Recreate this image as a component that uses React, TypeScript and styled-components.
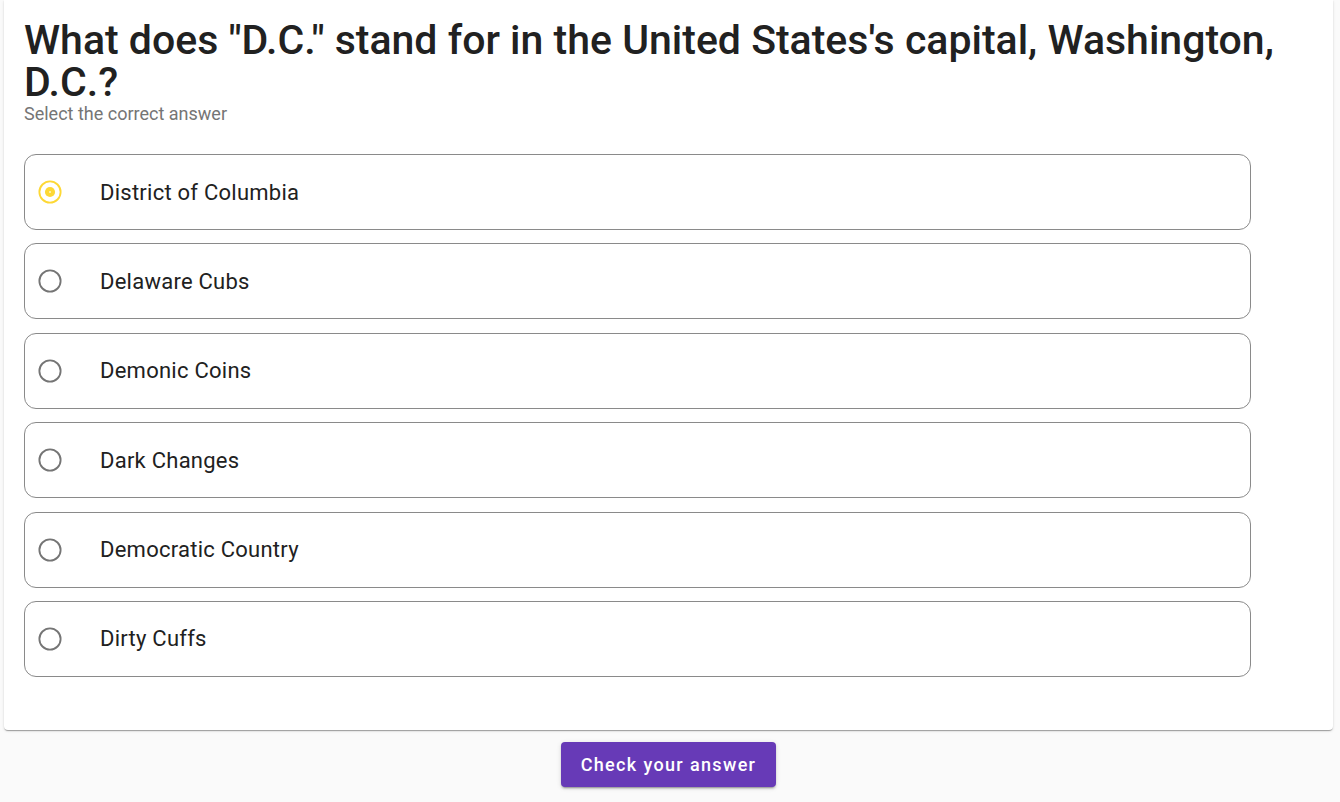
import React, { useState } from "react";
import styled, { createGlobalStyle } from "styled-components";

const GlobalStyle = createGlobalStyle`
  html, body {
    margin: 0;
    padding: 0;
    background: #fafafa;
    font-family: Roboto, "Liberation Sans", Arial, sans-serif;
  }
  * { box-sizing: border-box; }
`;

const Page = styled.div`
  display: flex;
  flex-direction: column;
  align-items: center;
  padding: 0 7px 14px 4px;
`;

const Card = styled.div`
  width: 100%;
  background: #ffffff;
  border-radius: 0 0 4px 4px;
  box-shadow: 0 2px 1px -1px rgba(0,0,0,0.2), 0 1px 1px 0 rgba(0,0,0,0.14), 0 1px 3px 0 rgba(0,0,0,0.12);
  padding: 19px 20px 53px 20px;
`;

const Title = styled.h1`
  margin: 0;
  font-size: 41px;
  line-height: 42px;
  font-weight: 500;
  color: #212121;
`;

const Subtitle = styled.div`
  font-size: 18px;
  line-height: 22px;
  color: #757575;
  font-weight: 400;
`;

const Options = styled.div`
  margin-top: 29px;
  width: 1227px;
  display: flex;
  flex-direction: column;
  gap: 13.4px;
`;

const Option = styled.label`
  height: 76px;
  display: flex;
  align-items: center;
  border: 1px solid #8a8a8a;
  border-radius: 12px;
  padding-left: 13px;
  cursor: pointer;
`;

const RadioBox = styled.span`
  width: 24px;
  height: 24px;
  display: flex;
  align-items: center;
  justify-content: center;
  flex: none;
`;

const OptionText = styled.span`
  margin-left: 38px;
  font-size: 22px;
  letter-spacing: 0.25px;
  color: #212121;
`;

const Button = styled.button`
  margin-top: 12px;
  height: 45px;
  width: 215px;
  border: none;
  border-radius: 4px;
  background: #673ab7;
  color: #ffffff;
  font-family: Roboto, "Liberation Sans", Arial, sans-serif;
  font-size: 18px;
  font-weight: 500;
  letter-spacing: 1.35px;
  box-shadow: 0 3px 1px -2px rgba(0,0,0,0.2), 0 2px 2px 0 rgba(0,0,0,0.14), 0 1px 5px 0 rgba(0,0,0,0.12);
  cursor: pointer;
`;

const Radio: React.FC<{ checked: boolean }> = ({ checked }) => (
  <RadioBox>
    <svg width="26" height="26" viewBox="0 0 26 26">
      {checked ? (
        <>
          <circle cx="13" cy="13" r="11.5" fill="none" stroke="#fdd835" strokeWidth="2" />
          <circle cx="13" cy="13" r="5.5" fill="#fdd835" />
          <circle cx="13" cy="13" r="1" fill="#fff8d0" />
        </>
      ) : (
        <circle cx="13" cy="13" r="11.5" fill="none" stroke="#757575" strokeWidth="2" />
      )}
    </svg>
  </RadioBox>
);

const answers = [
  "District of Columbia",
  "Delaware Cubs",
  "Demonic Coins",
  "Dark Changes",
  "Democratic Country",
  "Dirty Cuffs",
];

export default function App() {
  const [selected, setSelected] = useState(0);
  return (
    <>
      <GlobalStyle />
      <Page>
        <Card>
          <Title>What does "D.C." stand for in the United States's capital, Washington, D.C.?</Title>
          <Subtitle>Select the correct answer</Subtitle>
          <Options>
            {answers.map((a, i) => (
              <Option key={a} onClick={() => setSelected(i)}>
                <Radio checked={selected === i} />
                <OptionText>{a}</OptionText>
              </Option>
            ))}
          </Options>
        </Card>
        <Button>Check your answer</Button>
      </Page>
    </>
  );
}
